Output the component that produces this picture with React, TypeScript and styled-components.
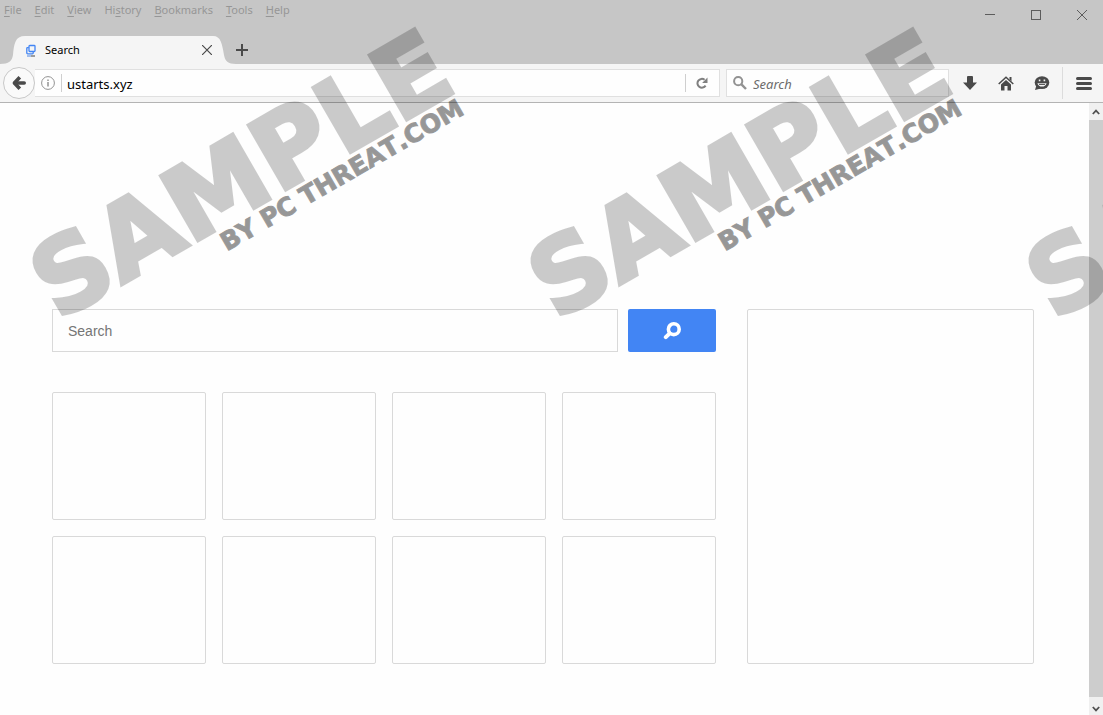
import React from 'react';
import styled, { createGlobalStyle } from 'styled-components';

const GlobalStyle = createGlobalStyle`
  *, *::before, *::after { box-sizing: border-box; }
  body { margin: 0; background: #fefefe; }
  button, input { font: inherit; margin: 0; }
`;

const UI_FONT = '"Noto Sans", "Open Sans", sans-serif';
const PAGE_FONT = '"Liberation Sans", Arial, sans-serif';

const Window = styled.div`
  position: relative;
  display: flex;
  flex-direction: column;
  min-height: 100vh;
  overflow: hidden;
  font-family: ${UI_FONT};
  font-size: 11px;
  color: #000;
`;

const TitleBar = styled.header`
  display: flex;
  flex-direction: column;
  background: #c6c6c6;
`;

const TitleRow = styled.div`
  display: flex;
  justify-content: space-between;
  height: 36px;
`;

const MenuBar = styled.nav`
  display: flex;
  align-items: flex-start;
  gap: 13px;
  padding: 2px 4px;
`;

const MenuItem = styled.button`
  padding: 0;
  border: 0;
  background: none;
  color: #969696;
  line-height: 16px;

  u { text-underline-offset: 2px; }
`;

const WindowControls = styled.div`
  display: flex;
`;

const WindowButton = styled.button`
  display: grid;
  place-items: center;
  width: 46px;
  height: 30px;
  padding: 0 0 0 4px;
  border: 0;
  background: none;
  color: #5c5c5c;
`;

const TabStrip = styled.div`
  display: flex;
  height: 28px;
`;

const Tab = styled.div`
  display: flex;
  width: 236px;
`;

const TabBody = styled.div`
  display: flex;
  flex: 1;
  align-items: center;
  background: #f5f5f5;
`;

const TabEdge = styled.svg`
  flex: none;
  display: block;
`;

const TabTitle = styled.span`
  flex: 1;
  padding-left: 8px;
  line-height: 16px;
`;

const TabButton = styled.button`
  display: grid;
  place-items: center;
  width: 12px;
  height: 28px;
  padding: 0;
  border: 0;
  background: none;
  color: #4a4a4a;
`;

const NavBar = styled.div`
  display: flex;
  align-items: center;
  height: 39px;
  padding-left: 3px;
  border-bottom: 1px solid #b4b4b4;
  background: #f5f5f5;
`;

const BackButton = styled.button`
  display: grid;
  place-items: center;
  flex: none;
  width: 32px;
  height: 32px;
  padding: 0;
  border: 1px solid #c8c8c8;
  border-radius: 50%;
  background: #fafafa;
  color: #4a4a4a;
`;

const Field = styled.form<{ $grow?: boolean }>`
  display: flex;
  align-items: center;
  flex: ${(p) => (p.$grow ? '1 1 0' : '0 0 223px')};
  height: 28px;
  margin-right: ${(p) => (p.$grow ? '6px' : '3px')};
  border: 1px solid #e0e0e0;
  border-left-width: ${(p) => (p.$grow ? '0' : '1px')};
  background: #fefefe;
`;

const FieldIcon = styled.span`
  display: grid;
  place-items: center;
  flex: none;
  width: 26px;
  color: #929292;
`;

const Divider = styled.span<{ $tall?: boolean }>`
  flex: none;
  width: 1px;
  height: ${(p) => (p.$tall ? '32px' : '18px')};
  margin-left: ${(p) => (p.$tall ? '2px' : '0')};
  background: ${(p) => (p.$tall ? '#dcdcdc' : '#cfcfcf')};
`;

const FieldInput = styled.input`
  flex: 1;
  min-width: 0;
  height: 24px;
  padding: 2px 0 0 5px;
  border: 0;
  outline: 0;
  background: transparent;
  font-size: 13px;
  color: #000;

  &::placeholder { color: #6c6c6c; opacity: 1; font-style: italic; }
`;

const SearchFieldInput = styled(FieldInput)`
  padding-left: 0;
`;

const ReloadButton = styled.button`
  display: grid;
  place-items: center;
  width: 33px;
  height: 24px;
  padding: 0 2px 0 0;
  border: 0;
  background: none;
  color: #808080;
`;

const ToolButton = styled.button<{ $wide?: boolean }>`
  display: grid;
  place-items: center;
  flex: none;
  width: ${(p) => (p.$wide ? '40px' : '36px')};
  height: 32px;
  padding: ${(p) => (p.$wide ? '0 0 0 2px' : '0')};
  border: 0;
  background: none;
  color: #4a4a4a;
`;

const Viewport = styled.div`
  display: flex;
  flex: 1;
`;

const Page = styled.main`
  flex: 1;
  display: grid;
  grid-template-columns: 664fr 287fr;
  gap: 31px;
  align-items: stretch;
  align-content: start;
  padding: 206px 55px 51px 52px;
  background: #fefefe;
  font-family: ${PAGE_FONT};
`;

const MainColumn = styled.div`
  display: flex;
  flex-direction: column;
  gap: 40px;
`;

const SearchForm = styled.form`
  display: flex;
  gap: 10px;
`;

const SearchInput = styled.input`
  flex: 1;
  min-width: 0;
  height: 43px;
  padding: 0 15px;
  border: 1px solid #d9d9d9;
  border-radius: 0;
  outline: 0;
  background: #fefefe;
  font-size: 14px;

  &::placeholder { color: #757575; opacity: 1; }
`;

const SearchButton = styled.button`
  display: grid;
  place-items: center;
  width: 88px;
  height: 43px;
  padding: 0;
  border: 0;
  border-radius: 2px;
  background: #4285f4;
  color: #fff;
`;

const TileGrid = styled.div`
  display: grid;
  grid-template-columns: repeat(4, 1fr);
  gap: 16px;
`;

const Tile = styled.div`
  height: 128px;
  border: 1px solid #d9d9d9;
  border-radius: 2px;
`;

const SidePanel = styled.aside`
  border: 1px solid #d9d9d9;
  border-radius: 2px;
`;

const ScrollBar = styled.div`
  display: flex;
  flex-direction: column;
  width: 14px;
  background: #f0f0f0;
`;

const ScrollArrow = styled.button<{ $down?: boolean }>`
  display: grid;
  place-items: center;
  height: ${(p) => (p.$down ? '18px' : '17px')};
  padding: ${(p) => (p.$down ? '6px 0 0' : '0')};
  border: 0;
  background: none;
  color: #505050;
`;

const ScrollThumb = styled.div`
  flex: 1;
  background: #cdcdcd;
`;

const WatermarkLayer = styled.svg`
  position: absolute;
  inset: 0;
  width: 100%;
  height: 100%;
  pointer-events: none;
  font-family: "DejaVu Sans", sans-serif;
  font-weight: 700;
  font-kerning: none;
`;

const MENUS = [
  ['', 'F', 'ile'],
  ['', 'E', 'dit'],
  ['', 'V', 'iew'],
  ['Hi', 's', 'tory'],
  ['', 'B', 'ookmarks'],
  ['', 'T', 'ools'],
  ['', 'H', 'elp'],
];

const TILES = [1, 2, 3, 4, 5, 6, 7, 8];
const WATERMARK_STARTS = [48, 546, 1044];

export default function App() {
  const stay = (e: React.FormEvent) => e.preventDefault();
  return (
    <Window>
      <GlobalStyle />
      <TitleBar>
        <TitleRow>
          <MenuBar>
            {MENUS.map(([before, key, after]) => (
              <MenuItem key={before + key + after} type="button">
                {before}<u>{key}</u>{after}
              </MenuItem>
            ))}
          </MenuBar>
          <WindowControls>
            <WindowButton type="button" aria-label="Minimize">
              <svg width="10" height="10"><path d="M0 4.5H10" stroke="currentColor" /></svg>
            </WindowButton>
            <WindowButton type="button" aria-label="Maximize">
              <svg width="10" height="10"><rect x=".5" y=".5" width="9" height="9" fill="none" stroke="currentColor" /></svg>
            </WindowButton>
            <WindowButton type="button" aria-label="Close window">
              <svg width="10" height="10"><path d="M0 0L10 10M10 0L0 10" stroke="currentColor" /></svg>
            </WindowButton>
          </WindowControls>
        </TitleRow>
        <TabStrip>
          <Tab>
            <TabEdge width="25" height="28">
              <path d="M0 28C9 28 12 25 13 19C14 8 15 0 25 0V28Z" fill="#f5f5f5" />
            </TabEdge>
            <TabBody>
              <svg width="12" height="13" aria-hidden="true">
                <rect x="4" y="1.5" width="6" height="6" rx=".8" fill="#f5f5f5" stroke="#4285f4" strokeWidth="1.3" />
                <path d="M3.8 3.6H2.6Q1.8 3.6 1.8 4.4V9Q1.8 9.8 2.6 9.8H7.4Q8.2 9.8 8.2 9V7.8" fill="none" stroke="#4285f4" strokeWidth="1.3" />
                <path d="M2 12H6" stroke="#7fa6e8" strokeWidth="1.4" />
                <path d="M6 12H10" stroke="#777" strokeWidth="1.4" />
              </svg>
              <TabTitle>Search</TabTitle>
              <TabButton type="button" aria-label="Close tab">
                <svg width="10" height="10"><path d="M0 0L10 10M10 0L0 10" stroke="currentColor" strokeWidth="1.2" /></svg>
              </TabButton>
            </TabBody>
            <TabEdge width="23" height="28">
              <path d="M23 28C15 28 12 25 11 19C9 8 8 0 0 0V28Z" fill="#f5f5f5" />
            </TabEdge>
          </Tab>
          <TabButton type="button" aria-label="New tab">
            <svg width="12" height="12"><path d="M0 6H12M6 0V12" stroke="currentColor" strokeWidth="2" /></svg>
          </TabButton>
        </TabStrip>
      </TitleBar>

      <NavBar>
        <BackButton type="button" aria-label="Back">
          <svg width="16" height="16" fill="none" stroke="currentColor" strokeWidth="3.6">
            <path d="M8.8 2.2L3.4 8L8.8 13.8" strokeLinejoin="round" />
            <path d="M4 8H13.2" strokeLinecap="round" />
          </svg>
        </BackButton>
        <Field $grow onSubmit={stay}>
          <FieldIcon>
            <svg width="14" height="14">
              <circle cx="7" cy="7" r="6.4" fill="none" stroke="currentColor" />
              <path d="M7 6V10.5M7 3.4V5" stroke="currentColor" strokeWidth="1.5" />
            </svg>
          </FieldIcon>
          <Divider />
          <FieldInput aria-label="Address" defaultValue="ustarts.xyz" />
          <Divider />
          <ReloadButton type="button" aria-label="Reload">
            <svg width="12" height="12">
              <path d="M9.6 8.6A4.4 4.4 0 1 1 8.6 2.8" fill="none" stroke="currentColor" strokeWidth="2" />
              <path d="M11.5 .5V5.9H6.1Z" fill="currentColor" />
            </svg>
          </ReloadButton>
        </Field>
        <Field onSubmit={stay}>
          <FieldIcon>
            <svg width="14" height="14" fill="none" stroke="currentColor">
              <circle cx="5.2" cy="5.2" r="4.1" strokeWidth="2" />
              <path d="M8.2 8.2L13 13" strokeWidth="2.4" />
            </svg>
          </FieldIcon>
          <SearchFieldInput aria-label="Search the web" placeholder="Search" />
        </Field>
        <ToolButton type="button" aria-label="Downloads">
          <svg width="14" height="14"><path d="M4 1Q4 0 5 0H9Q10 0 10 1V6.5H14L7 14L0 6.5H4Z" fill="currentColor" /></svg>
        </ToolButton>
        <ToolButton type="button" aria-label="Home">
          <svg width="16" height="15" fill="currentColor">
            <path d="M.7 8L8 1.2L15.3 8" fill="none" stroke="currentColor" strokeWidth="1.5" />
            <path d="M11.5 1H13.5V5.2L11.5 3.4Z" />
            <path d="M8 4L13 8.6V14.5H9.5V10H6.5V14.5H3V8.6Z" />
          </svg>
        </ToolButton>
        <ToolButton type="button" aria-label="Chat">
          <svg width="16" height="14">
            <ellipse cx="8" cy="6.6" rx="7.3" ry="6.4" fill="currentColor" />
            <path d="M2.5 9L1 14L7 12.5Z" fill="currentColor" />
            <path d="M4.8 4.4H6.4M9.6 4.4H11.2" stroke="#f5f5f5" strokeWidth="1.8" />
            <path d="M3.4 7.2H12.6Q11.5 10.6 8 10.6Q4.5 10.6 3.4 7.2Z" fill="#f5f5f5" />
            <path d="M5 8.4H11" stroke="currentColor" />
          </svg>
        </ToolButton>
        <Divider $tall />
        <ToolButton $wide type="button" aria-label="Open menu">
          <svg width="16" height="13"><path d="M1.5 1.5H14.5M1.5 6.5H14.5M1.5 11.5H14.5" stroke="currentColor" strokeWidth="3" strokeLinecap="round" /></svg>
        </ToolButton>
      </NavBar>

      <Viewport>
        <Page>
          <MainColumn>
            <SearchForm onSubmit={stay}>
              <SearchInput aria-label="Search" placeholder="Search" />
              <SearchButton type="submit" aria-label="Submit search">
                <svg width="18" height="18" fill="none" stroke="currentColor">
                  <circle cx="10.8" cy="7.2" r="5.4" strokeWidth="3.6" />
                  <path d="M6.7 11.3L2.8 15.2" strokeWidth="4" strokeLinecap="round" />
                </svg>
              </SearchButton>
            </SearchForm>
            <TileGrid>
              {TILES.map((tile) => <Tile key={tile} />)}
            </TileGrid>
          </MainColumn>
          <SidePanel />
        </Page>
        <ScrollBar>
          <ScrollArrow type="button" aria-label="Scroll up">
            <svg width="8" height="6"><path d="M.8 5L4 1.6L7.2 5" fill="none" stroke="currentColor" strokeWidth="1.8" /></svg>
          </ScrollArrow>
          <ScrollThumb />
          <ScrollArrow $down type="button" aria-label="Scroll down">
            <svg width="8" height="6"><path d="M.8 1L4 4.4L7.2 1" fill="none" stroke="currentColor" strokeWidth="1.8" /></svg>
          </ScrollArrow>
        </ScrollBar>
      </Viewport>

      <WatermarkLayer aria-hidden="true">
        {WATERMARK_STARTS.map((x) => (
          <g key={x} transform={`translate(${x} 320) rotate(-30)`} fill="#000" stroke="#000">
            <text x="8" y="6" fontSize="102" strokeWidth="4" opacity=".2">SAMPLE</text>
            <text x="189" y="30" fontSize="25" strokeWidth="1" opacity=".4">BY PC THREAT.COM</text>
          </g>
        ))}
      </WatermarkLayer>
    </Window>
  );
}
